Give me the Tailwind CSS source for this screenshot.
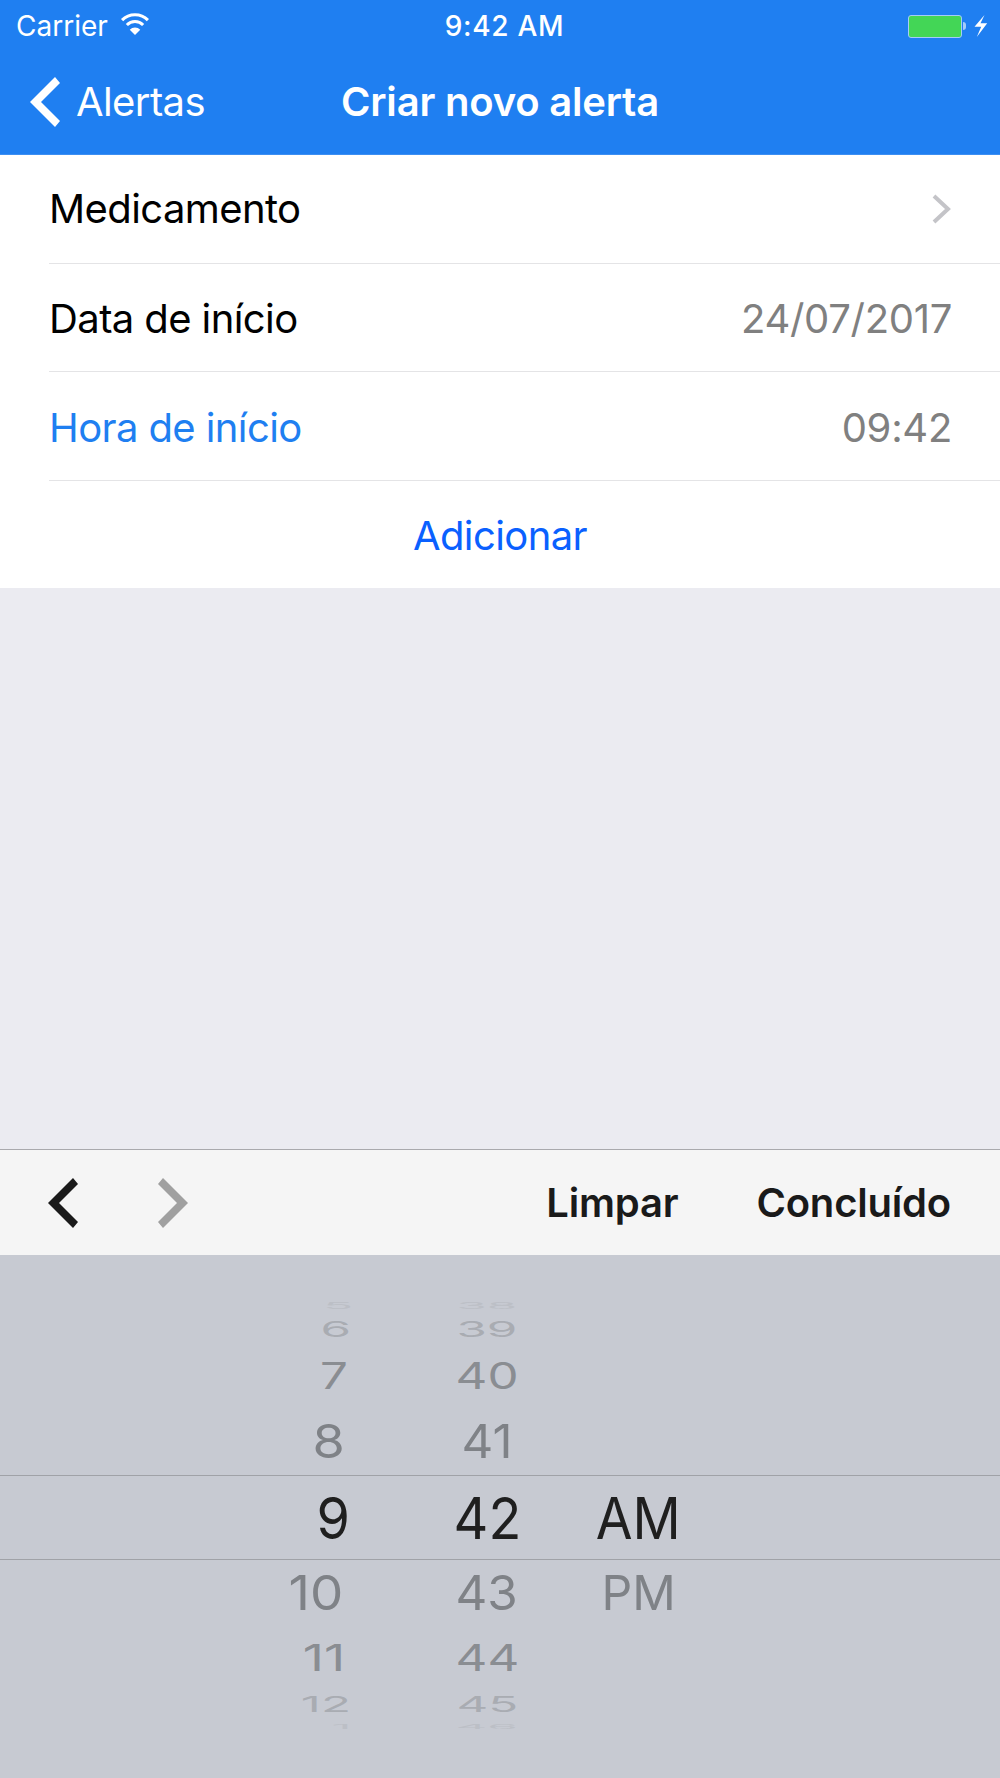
<!DOCTYPE html>
<html lang="pt">
<head>
<meta charset="utf-8">
<title>Criar novo alerta</title>
<script src="https://cdn.jsdelivr.net/npm/@tailwindcss/browser@4"></script>
</head>
<body class="bg-[#ebebf1] font-[Inter,sans-serif] text-black">
<div class="flex h-[1778px] w-[1000px] flex-col overflow-hidden">

  <!-- Status bar + nav -->
  <header class="h-[155px] flex-none border-b border-[#3d8ff2] bg-[#1f7ff1] text-white">
    <div class="relative flex h-[52px] items-center justify-between pl-4 pr-3">
      <div class="flex items-center gap-[12px]">
        <span class="text-[28px]">Carrier</span>
        <svg class="mb-[5px] h-[22px] w-[30px]" viewBox="0 0 30 23" fill="none" stroke="currentColor" stroke-width="3.2"><path d="M1.5 7.5a19 19 0 0 1 27 0"/><path d="M6.5 12.5a12 12 0 0 1 17 0"/><path d="M15 23l-5.5-5.5a7.5 7.5 0 0 1 11 0z" fill="currentColor" stroke="none"/></svg>
      </div>
      <span class="absolute left-0 right-0 pl-[9px] text-center text-[28px] font-medium tracking-[0.7px]">9:42 AM</span>
      <div class="flex items-center gap-[8px]">
        <div class="flex items-center gap-px">
          <div class="h-[23px] w-[54px] rounded-[3px] border border-[#a5ccf8] bg-[#43d656]"></div>
          <div class="h-[8px] w-[3px] rounded-r-full bg-[#a5ccf8]"></div>
        </div>
        <svg class="h-[22px] w-[14px]" viewBox="0 0 13 22" fill="currentColor"><path d="M10 0L0 11.7h6.7L2.3 22 12.7 8.3H6z"/></svg>
      </div>
    </div>
    <div class="relative flex h-[102px] items-center pb-[2px] pl-[30px]">
      <svg class="h-[50px] w-[30px]" viewBox="0 0 30 50" fill="currentColor"><path d="M25 0l5 6-19 19 19 19-5 6L0 25z"/></svg>
      <span class="ml-[16px] text-[40px] tracking-[-0.6px]">Alertas</span>
      <h1 class="absolute left-0 right-0 text-center text-[40px] font-semibold tracking-[-0.2px]">Criar novo alerta</h1>
    </div>
  </header>

  <!-- Form -->
  <section class="flex-none bg-white text-[40px] tracking-[-0.6px]">
    <div class="pl-[49px]">
      <div class="flex h-[109px] items-center justify-between border-b border-[#e4e4e6] pr-[49px]">
        <span>Medicamento</span>
        <svg class="h-[30px] w-[20px]" viewBox="0 0 20 30" fill="none" stroke="#c4c4c8" stroke-width="4"><path d="M3 2l14 13L3 28"/></svg>
      </div>
      <div class="flex h-[108px] items-center justify-between border-b border-[#e4e4e6] pr-[48px] pt-[3px]">
        <span>Data de início</span>
        <span class="text-[#808080] tracking-[-0.3px]">24/07/2017</span>
      </div>
      <div class="flex h-[109px] items-center justify-between border-b border-[#e4e4e6] pr-[48px] pt-[3px]">
        <span class="text-[#1f7ff1]">Hora de início</span>
        <span class="text-[#808080] tracking-[-0.3px]">09:42</span>
      </div>
    </div>
    <div class="flex h-[107px] items-center justify-center pt-[2px] text-[#0a60ff]">Adicionar</div>
  </section>

  <div class="flex-1"></div>

  <!-- Toolbar -->
  <div class="flex h-[106px] flex-none items-center justify-between border-t border-[#a9a9ad] bg-[#f5f5f5] pl-[48px] pr-[49px]">
    <div class="flex items-center gap-[80px]">
      <svg class="h-[50px] w-[30px]" viewBox="0 0 30 50" fill="#1a1a1a"><path d="M25 0l5 6-19 19 19 19-5 6L0 25z"/></svg>
      <svg class="h-[50px] w-[30px]" viewBox="0 0 30 50" fill="#a0a0a0"><path d="M5 0L0 6l19 19L0 44l5 6 25-25z"/></svg>
    </div>
    <div class="flex items-center gap-[78px] text-[40px] font-semibold tracking-[-0.2px] text-[#1a1a1a]">
      <span>Limpar</span>
      <span>Concluído</span>
    </div>
  </div>

  <!-- Time picker -->
  <div class="h-[523px] flex-none bg-[#c7cad2] pt-[40px] text-[58px] leading-none">
    <div class="grid h-[22px] grid-cols-[360px_232px_92px] items-center leading-[0] text-[#bcbfc6]">
      <span class="justify-self-end pr-[7px]"><span class="inline-block origin-right scale-x-[0.85] scale-y-[0.16]">5</span></span>
      <span class="pl-[22px] text-center"><span class="inline-block scale-x-[0.85] scale-y-[0.16]">38</span></span>
    </div>
    <div class="grid h-[24px] grid-cols-[360px_232px_92px] items-center leading-[0] text-[#a9acb2]">
      <span class="justify-self-end pr-[9px]"><span class="inline-block origin-right scale-x-[0.85] scale-y-[0.38]">6</span></span>
      <span class="pl-[22px] text-center"><span class="inline-block scale-x-[0.85] scale-y-[0.38]">39</span></span>
    </div>
    <div class="grid h-[70px] grid-cols-[360px_232px_92px] items-center text-[#8a8d92]">
      <span class="justify-self-end pr-[12px]"><span class="inline-block origin-right scale-x-[0.85] scale-y-[0.63]">7</span></span>
      <span class="pl-[22px] text-center"><span class="inline-block scale-x-[0.85] scale-y-[0.63]">40</span></span>
    </div>
    <div class="grid h-[64px] grid-cols-[360px_232px_92px] items-center pb-[4px] text-[#7f8287]">
      <span class="justify-self-end pr-[15px]"><span class="inline-block origin-right scale-x-[0.9] scale-y-[0.81]">8</span></span>
      <span class="pl-[22px] text-center"><span class="inline-block scale-x-[0.85] scale-y-[0.81]">41</span></span>
    </div>
    <div class="grid h-[85px] grid-cols-[360px_232px_92px] items-center border-y border-[#a0a2a7] text-[#1f1f1f]">
      <span class="justify-self-end pr-[10px]"><span class="inline-block origin-right scale-x-[0.93]">9</span></span>
      <span class="pl-[22px] text-center"><span class="inline-block scale-x-[0.93]">42</span></span>
      <span class="text-center"><span class="inline-block scale-x-[0.92]">AM</span></span>
    </div>
    <div class="grid h-[66px] grid-cols-[360px_232px_92px] items-center text-[#7f8287]">
      <span class="justify-self-end pr-[17px]"><span class="inline-block origin-right scale-x-[0.91] scale-y-[0.83]">10</span></span>
      <span class="pl-[22px] text-center"><span class="inline-block scale-x-[0.85] scale-y-[0.83]">43</span></span>
      <span class="pl-[2px] text-center"><span class="inline-block scale-x-[0.83] scale-y-[0.83]">PM</span></span>
    </div>
    <div class="grid h-[64px] grid-cols-[360px_232px_92px] items-center text-[#8a8d92]">
      <span class="justify-self-end pr-[15px]"><span class="inline-block origin-right scale-x-[0.9] scale-y-[0.63]">11</span></span>
      <span class="pl-[22px] text-center"><span class="inline-block scale-x-[0.85] scale-y-[0.63]">44</span></span>
    </div>
    <div class="grid h-[28px] grid-cols-[360px_232px_92px] items-center leading-[0] text-[#a9acb2]">
      <span class="justify-self-end pr-[9px]"><span class="inline-block origin-right scale-x-[0.85] scale-y-[0.38]">12</span></span>
      <span class="pl-[22px] text-center"><span class="inline-block scale-x-[0.85] scale-y-[0.38]">45</span></span>
    </div>
    <div class="grid h-[18px] grid-cols-[360px_232px_92px] items-center leading-[0] text-[#bcbfc6]">
      <span class="justify-self-end pr-[8px]"><span class="inline-block origin-right scale-x-[0.85] scale-y-[0.1]">1</span></span>
      <span class="pl-[22px] text-center"><span class="inline-block scale-x-[0.85] scale-y-[0.1]">46</span></span>
    </div>
  </div>
</div>
</body>
</html>
